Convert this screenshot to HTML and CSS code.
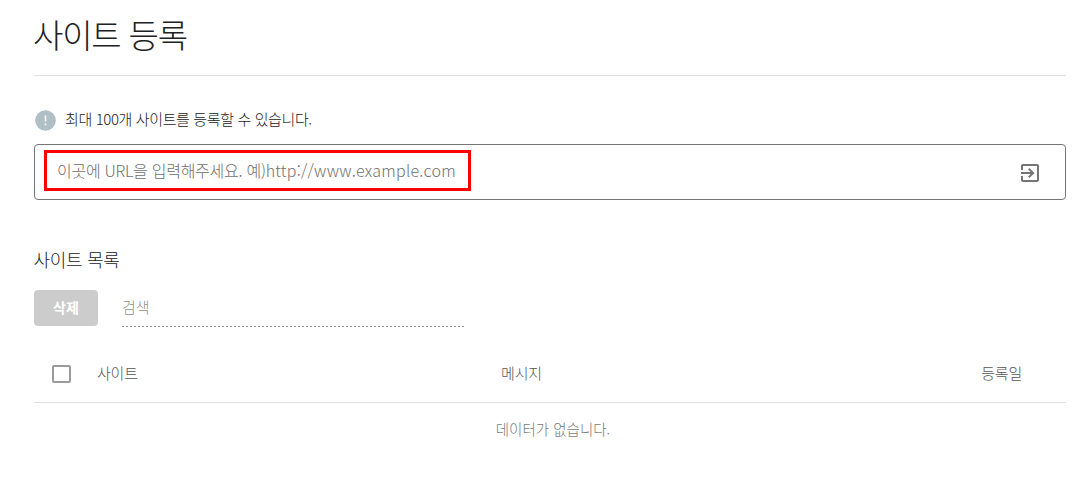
FILE: index.html
```html
<!DOCTYPE html>
<html lang="ko">
<head>
    <meta charset="UTF-8">
    <meta name="viewport" content="width=device-width, initial-scale=1.0">
    <title>사이트 등록</title>
    <link rel="stylesheet" href="styles.css">
</head>
<body>
    <div class="container">
        <h1>사이트 등록</h1>

        <div class="notice">
            <svg class="notice-icon" viewBox="0 0 21 21">
                <circle cx="10.5" cy="10.5" r="10.3" fill="#b0bec5"/>
                <path d="M10.5 5.5v6M10.5 13.6v1.7" stroke="#fff" stroke-width="1.5"/>
            </svg>
            <span class="notice-text">최대 100개 사이트를 등록할 수 있습니다.</span>
        </div>

        <div class="url-box">
            <div class="url-highlight">
                <span class="url-guide">이곳에 URL을 입력해주세요. 예)</span><span class="url-sample">http://www.example.com</span>
            </div>
            <svg class="submit-icon" viewBox="0 0 24 24">
                <path fill="#757575" d="M10.09 15.59L11.5 17l5-5-5-5-1.41 1.41L12.67 11H3v2h9.67l-2.58 2.59zM19 3H5c-1.11 0-2 .9-2 2v4h2V5h14v14H5v-4H3v4c0 1.1.89 2 2 2h14c1.1 0 2-.9 2-2V5c0-1.1-.9-2-2-2z"/>
            </svg>
        </div>

        <h2>사이트 목록</h2>
        <div class="toolbar">
            <button class="delete-btn" disabled>삭제</button>
            <div class="search"><span>검색</span></div>
        </div>

        <table>
            <thead>
                <tr>
                    <th class="col-check"><span class="checkbox"></span></th>
                    <th class="col-site"><span>사이트</span></th>
                    <th class="col-message"><span>메시지</span></th>
                    <th class="col-date"><span>등록일</span></th>
                </tr>
            </thead>
            <tbody>
                <tr>
                    <td colspan="4"><span>데이터가 없습니다.</span></td>
                </tr>
            </tbody>
        </table>
    </div>
</body>
</html>
```
FILE: styles.css
```css
* {
    box-sizing: border-box;
}

body {
    margin: 0;
    background: #fff;
    font-family: "Noto Sans CJK KR", sans-serif;
    font-weight: 300;
    color: #212121;
}

.container {
    width: 1032px;
    margin-left: 34px;
}

h1 {
    height: 76px;
    margin: 0;
    border-bottom: 1px solid #e0e0e0;
    font-size: 33px;
    font-weight: 300;
    line-height: 68px;
    letter-spacing: -1.2px;
    text-indent: -1px;
}

.notice {
    display: flex;
    align-items: center;
    height: 24px;
    margin-top: 32px;
}

.notice-icon {
    width: 21px;
    height: 21px;
    margin: 0 9px 0 1px;
}

.notice-text {
    padding-bottom: 2px;
    font-size: 15px;
    line-height: 22px;
    letter-spacing: -0.38px;
}

.url-box {
    display: flex;
    justify-content: space-between;
    height: 56px;
    margin-top: 12px;
    padding: 5px 23px 0 9px;
    border: 1px solid #757575;
    border-radius: 4px;
}

/* 입력창 강조 테두리 */
.url-highlight {
    width: 427px;
    height: 41px;
    padding-left: 10px;
    border: 3px solid #f00;
    color: #6e6e6e;
    font-size: 16px;
    line-height: 35px;
    white-space: nowrap;
}

.url-guide {
    letter-spacing: -0.27px;
}

.url-sample {
    letter-spacing: 0.26px;
}

.submit-icon {
    width: 24px;
    height: 24px;
    margin-top: 11px;
}

h2 {
    margin: 45px 0 0;
    font-size: 18px;
    font-weight: 300;
    line-height: 28px;
    letter-spacing: -0.3px;
    text-indent: -0.5px;
}

.toolbar {
    display: flex;
    margin-top: 17px;
}

.delete-btn {
    width: 64px;
    height: 36px;
    padding: 0 0 2px;
    border: 0;
    border-radius: 4px;
    background: #ccc;
    color: #fff;
    font-family: inherit;
    font-size: 14px;
    font-weight: 700;
}

.search {
    width: 342px;
    height: 37px;
    margin-left: 24px;
    background: repeating-linear-gradient(to right, #949494 0 2px, transparent 2px 4px) left bottom / 100% 1px no-repeat;
    color: #8e8e8e;
    font-size: 15px;
    line-height: 34px;
}

table {
    width: 100%;
    margin-top: 18px;
    border-collapse: collapse;
    table-layout: fixed;
}

th {
    height: 57px;
    padding: 0 0 1px;
    border-bottom: 1px solid #e0e0e0;
    color: #555;
    font-size: 15px;
    font-weight: 300;
    letter-spacing: -0.2px;
}

td {
    height: 54px;
    padding: 0 0 1px;
    color: #7a7a7a;
    font-size: 14.5px;
    text-align: center;
    text-indent: 6px;
}

.col-check {
    width: 63px;
    padding: 2px 0 0 18px;
    text-align: left;
}

.col-site {
    width: 252px;
    text-align: left;
}

.col-message {
    width: 345px;
}

.col-date {
    padding-right: 44px;
    text-align: right;
}

.checkbox {
    display: block;
    width: 19px;
    height: 18px;
    border: 2px solid #9a9a9a;
    border-radius: 2px;
}
```
